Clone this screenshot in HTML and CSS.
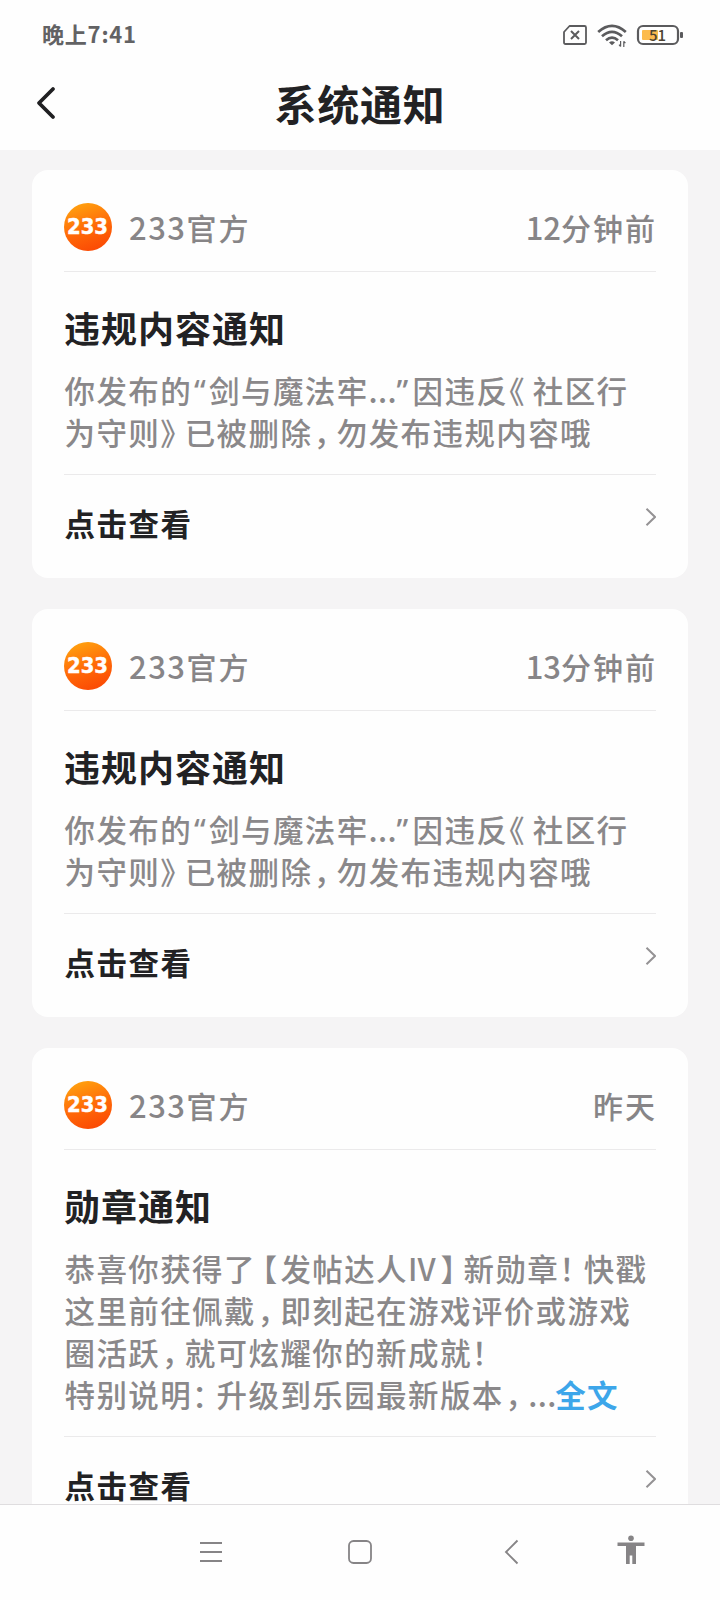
FILE: index.html
```html
<!DOCTYPE html>
<html lang="zh-CN">
<head>
<meta charset="utf-8">
<title>系统通知</title>
<link rel="stylesheet" href="styles.css">
</head>
<body>
<svg class="defs" width="0" height="0">
  <defs>
    <linearGradient id="orange" x1="0.25" y1="0" x2="0.6" y2="1">
      <stop offset="0" stop-color="#ffa30f"/>
      <stop offset="0.55" stop-color="#ff6a08"/>
      <stop offset="1" stop-color="#fb4a04"/>
    </linearGradient>
    <symbol id="logo" viewBox="0 0 48 48">
      <circle cx="24" cy="24" r="24" fill="url(#orange)"/>
      <text class="logo-text" x="3" y="31.4" textLength="41" lengthAdjust="spacingAndGlyphs">233</text>
    </symbol>
    <symbol id="chevron" viewBox="0 0 12 20">
      <path d="M2.500 1.700 11 10 2.500 18.300" fill="none" stroke="#949294" stroke-width="2"/>
    </symbol>
  </defs>
</svg>
<div class="screen">
  <header class="top">
    <div class="status">
      <span class="clock">晚上7:41</span>
      <div class="status-icons">
        <svg width="26" height="22" viewBox="0 0 26 22" fill="none" stroke="#5b5b5d" stroke-width="1.8">
          <path d="M7.5 2H22.5Q24 2 24 3.500V18.500Q24 20 22.500 20H3.500Q2 20 2 18.500V8Z" stroke-linejoin="round"/>
          <path d="M9 7 17 15M17 7 9 15" stroke-width="2"/>
        </svg>
        <svg class="wifi" width="30" height="23" viewBox="0 0 30 23" fill="none" stroke="#5b5b5d" stroke-width="2.700">
          <path d="M1.200 8Q15-4.200 28.800 8M5 12.300Q15 3.400 25 12.300M9 16.300Q15 11 21 16.300"/>
          <path d="M12 18.500Q15 16 18 18.500L15 21.300Z" fill="#5b5b5d" stroke="none"/>
          <path d="M23.600 17V22.500M23.600 22.500 22 20.700M26.800 23V17.300M26.800 17.300 28.400 19.200" stroke-width="1.200"/>
        </svg>
        <svg class="battery" width="48" height="22" viewBox="0 0 48 22">
          <rect x="2" y="2" width="40" height="18" rx="5" fill="#fff" stroke="#5b5b5d" stroke-width="2.200"/>
          <rect x="6" y="6" width="16" height="10" rx="1" fill="#fcbb4d"/>
          <rect x="44" y="8" width="3" height="6" rx="1" fill="#5b5b5d"/>
          <text class="battery-text" x="13" y="16.500">51</text>
        </svg>
      </div>
    </div>
    <div class="titlebar">
      <svg class="back" width="22" height="36" viewBox="0 0 22 36"><path d="M18 4 4 18 18 32" fill="none" stroke="#202022" stroke-width="3.800" stroke-linecap="round" stroke-linejoin="round"/></svg>
      <h1 class="page-title">系统通知</h1>
    </div>
  </header>

  <main class="list">
    <article class="card">
      <div class="card-head">
        <svg class="avatar"><use href="#logo"/></svg>
        <span class="sender"><span class="digits">233</span>官方</span>
        <span class="time"><span class="num">12</span>分钟前</span>
      </div>
      <div class="card-body">
        <h2 class="card-title">违规内容通知</h2>
        <p class="line">你发布的<span class="q q-open">“</span>剑与魔法牢<span class="dots">...</span><span class="q q-close">”</span>因违反<span class="p angle">《</span>社区行</p>
        <p class="line">为守则<span class="p close">》</span>已被删除<span class="p">，</span>勿发布违规内容哦</p>
      </div>
      <div class="card-foot"><span class="action">点击查看</span><svg class="chev"><use href="#chevron"/></svg></div>
    </article>

    <article class="card">
      <div class="card-head">
        <svg class="avatar"><use href="#logo"/></svg>
        <span class="sender"><span class="digits">233</span>官方</span>
        <span class="time"><span class="num">13</span>分钟前</span>
      </div>
      <div class="card-body">
        <h2 class="card-title">违规内容通知</h2>
        <p class="line">你发布的<span class="q q-open">“</span>剑与魔法牢<span class="dots">...</span><span class="q q-close">”</span>因违反<span class="p angle">《</span>社区行</p>
        <p class="line">为守则<span class="p close">》</span>已被删除<span class="p">，</span>勿发布违规内容哦</p>
      </div>
      <div class="card-foot"><span class="action">点击查看</span><svg class="chev"><use href="#chevron"/></svg></div>
    </article>

    <article class="card">
      <div class="card-head">
        <svg class="avatar"><use href="#logo"/></svg>
        <span class="sender"><span class="digits">233</span>官方</span>
        <span class="time">昨天</span>
      </div>
      <div class="card-body">
        <h2 class="card-title">勋章通知</h2>
        <p class="line">恭喜你获得了<span class="p open">【</span>发帖达人<span class="roman">IV</span><span class="p">】</span>新勋章<span class="p mark">！</span>快戳</p>
        <p class="line">这里前往佩戴<span class="p">，</span>即刻起在游戏评价或游戏</p>
        <p class="line">圈活跃<span class="p">，</span>就可炫耀你的新成就<span class="p mark">！</span></p>
        <p class="line">特别说明<span class="p mark">：</span>升级到乐园最新版本<span class="p">，</span><span class="dots">...</span><span class="more">全文</span></p>
      </div>
      <div class="card-foot"><span class="action">点击查看</span><svg class="chev"><use href="#chevron"/></svg></div>
    </article>
  </main>

  <nav class="nav">
    <svg viewBox="0 0 30 32"><path d="M4 7H26M4 16H26M4 25H26" stroke="#868486" stroke-width="1.800"/></svg>
    <svg viewBox="0 0 30 32"><rect x="4" y="5" width="22" height="22" rx="4.500" fill="none" stroke="#868486" stroke-width="1.800"/></svg>
    <svg viewBox="0 0 30 32"><path d="M21.500 4.500 10 16 21.500 27.500" fill="none" stroke="#868486" stroke-width="1.900"/></svg>
    <svg viewBox="0 0 30 32"><g fill="#868486"><circle cx="15" cy="2.200" r="2.800"/><path d="M1.500 6.500H28.500V10H20V28H16.300V19.500H13.700V28H10V10H1.500Z"/></g></svg>
  </nav>
</div>
</body>
</html>
```
FILE: styles.css
```css
* { box-sizing: border-box; }
body {
  margin: 0;
  font-family: "Noto Sans CJK SC", sans-serif;
  background: #f5f4f5;
}
h1, h2, p { margin: 0; }
.defs { position: absolute; }
.screen {
  display: flex;
  flex-direction: column;
  width: 720px;
  height: 1600px;
  overflow: hidden;
}

/* Status bar and title */
.top { flex: none; height: 150px; background: #fefefe; }
.status {
  display: flex;
  justify-content: space-between;
  align-items: center;
  height: 70px;
  padding: 0 36px 0 42px;
}
.clock {
  padding-bottom: 4px;
  font-size: 22px;
  line-height: 30px;
  font-weight: 700;
  letter-spacing: 0.8px;
  color: #626264;
}
.status-icons { display: flex; align-items: center; }
.wifi { margin-left: 9px; }
.battery { margin-left: 9px; }
.battery-text { font: 500 15px "Noto Sans CJK SC", sans-serif; fill: #4d4332; }
.titlebar {
  display: grid;
  grid-template-columns: 60px 1fr 60px;
  align-items: center;
  height: 66px;
}
.back { margin-left: 35px; }
.page-title {
  font-size: 42px;
  line-height: 60px;
  font-weight: 700;
  letter-spacing: 0.8px;
  text-align: center;
  color: #222224;
}

/* Notification cards */
.list {
  flex: 1;
  min-height: 0;
  overflow: hidden;
  display: flex;
  flex-direction: column;
  gap: 31px;
  padding: 20px 32px 0;
}
.card {
  flex: none;
  padding: 0 32px;
  border-radius: 16px;
  background: #fefefe;
}
.card-head {
  display: flex;
  align-items: center;
  height: 102px;
  padding-top: 12px;
  border-bottom: 1px solid #ebeaeb;
}
.avatar { width: 48px; height: 48px; }
.logo-text { font: 700 20.5px "DejaVu Sans", sans-serif; fill: #fff; stroke: #fff; stroke-width: 0.5; }
.sender, .time {
  font-size: 30px;
  line-height: 44px;
  font-weight: 500;
  letter-spacing: 2px;
  color: #878587;
}
.sender { margin-left: 17px; }
.time { margin-left: auto; margin-right: -1px; }
.digits { font-size: 31px; letter-spacing: 1.500px; }
.num { font-size: 31px; letter-spacing: 0; }
.card-body {
  padding: 30px 0 21px;
  border-bottom: 1px solid #ebeaeb;
}
.card-title {
  height: 67px;
  font-size: 36px;
  line-height: 50px;
  font-weight: 700;
  letter-spacing: 1px;
  color: #222224;
}
.line {
  display: flex;
  height: 42px;
  padding-left: 0.5px;
  font-size: 30.500px;
  line-height: 42px;
  font-weight: 500;
  letter-spacing: 1.400px;
  color: #8a888a;
  white-space: nowrap;
}
/* Punctuation is set on a narrower cell than the characters */
.p {
  flex: none;
  width: 24.500px;
  padding-left: 1.500px;
  letter-spacing: 0;
  font-feature-settings: "halt";
}
.mark { padding-left: 0; }
.close { padding-left: 0; }
.angle { padding-left: 1px; }
.open { padding-left: 6px; }
.q { flex: none; width: 17px; letter-spacing: 0; font-family: "Noto Sans", sans-serif; }
.q-open { padding-left: 2px; }
.q-close { padding-left: 1px; }
.dots { flex: none; width: 27px; letter-spacing: 0.400px; }
.roman { flex: none; width: 31px; letter-spacing: 0; }
.more { font-weight: 700; color: #3da6ea; }
.card-foot {
  display: flex;
  justify-content: space-between;
  height: 103px;
  padding-top: 26px;
}
.action {
  padding-left: 0.5px;
  font-size: 30.500px;
  line-height: 44px;
  font-weight: 700;
  letter-spacing: 1.500px;
  color: #222224;
}
.chev { width: 12px; height: 20px; margin-top: 6px; }

/* System navigation */
.nav {
  flex: none;
  display: grid;
  grid-template-columns: 152px 145px 157px 83px;
  justify-content: start;
  align-items: center;
  justify-items: center;
  height: 96px;
  padding: 0 0 1px 135px;
  border-top: 1px solid #dfdddf;
  background: #fefefe;
}
.nav svg { width: 30px; height: 32px; overflow: visible; }
```
